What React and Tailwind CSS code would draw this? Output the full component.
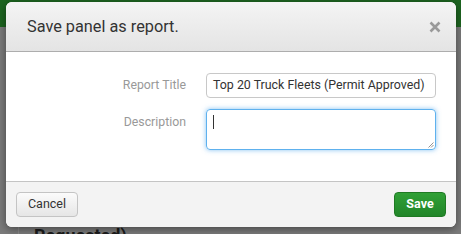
import React from "react";

export default function App() {
  return (
    <div className="relative w-[461px] h-[234px] overflow-hidden bg-[#7b7b7b]" style={{ fontFamily: "Roboto, 'Liberation Sans', sans-serif" }}>
      {/* underlying page */}
      <div className="h-[27px] bg-[#1d6520]" />
      <div className="flex h-[207px]">
        <div className="w-[19px] border-r border-[#8a8a8a]" />
        <div className="flex-1 flex flex-col justify-end pl-[15px]">
          <div className="text-[18px] font-bold text-[#1c1c1c] leading-none translate-y-[11px]">Requested)</div>
        </div>
      </div>

      {/* dialog */}
      <div className="absolute left-[6px] top-[2px] w-[450px] h-[225px] rounded-[6px] overflow-hidden bg-white flex flex-col shadow-[0_2px_8px_rgba(0,0,0,0.45)]">
        <div className="h-[50px] shrink-0 flex items-center justify-between pl-[21px] pr-[15px] bg-gradient-to-b from-[#f4f4f4] to-[#e4e4e4] border-b border-[#adadad]">
          <div className="text-[16.3px] text-[#333] pt-[1px]">Save panel as report.</div>
          <svg width="12" height="12" viewBox="0 0 12 12" className="mt-[1px]">
            <path d="M1.5 1.5 L10.5 10.5 M10.5 1.5 L1.5 10.5" stroke="#9a9a9a" strokeWidth="2.6" strokeLinecap="butt" />
          </svg>
        </div>
        <div className="h-[129px] shrink-0 pt-[21px] flex flex-col gap-[11px] bg-white">
          <div className="flex items-center">
            <div className="w-[180px] text-right text-[12.3px] text-[#999]">Report Title</div>
            <div className="ml-[20px] w-[230px] h-[25px] rounded-[4px] border border-[#c8c8c8] flex items-center pl-[6px] text-[12.4px] text-[#333] whitespace-nowrap">
              Top 20 Truck Fleets (Permit Approved)
            </div>
          </div>
          <div className="flex items-start">
            <div className="w-[180px] text-right text-[12.3px] text-[#999] pt-[4px]">Description</div>
            <div className="relative ml-[20px] w-[230px] h-[41px] rounded-[4px] border border-[#5eb1ee] shadow-[0_0_5px_rgba(82,168,236,0.7)]">
              <div className="absolute left-[6px] top-[5px] w-px h-[14px] bg-[#333]" />
              <svg width="6" height="6" viewBox="0 0 6 6" className="absolute right-[1px] bottom-[1px]">
                <path d="M0.5 5.5 L5.5 0.5 M3 5.5 L5.5 3" stroke="#777" strokeWidth="0.8" />
              </svg>
            </div>
          </div>
        </div>
        <div className="flex-1 border-t border-[#c4c4c4] bg-[#f3f3f3] flex items-center justify-between px-[10px]">
          <div className="w-[62px] h-[25px] rounded-[4px] border border-[#c4c4c4] bg-gradient-to-b from-[#fbfbfb] to-[#e6e6e6] flex items-center justify-center text-[12.5px] text-[#333]">
            Cancel
          </div>
          <div className="w-[52px] h-[25px] rounded-[4px] border border-[#1f7a23] bg-gradient-to-b from-[#30a035] to-[#22862a] flex items-center justify-center text-[12.5px] font-bold text-white">
            Save
          </div>
        </div>
      </div>
    </div>
  );
}
